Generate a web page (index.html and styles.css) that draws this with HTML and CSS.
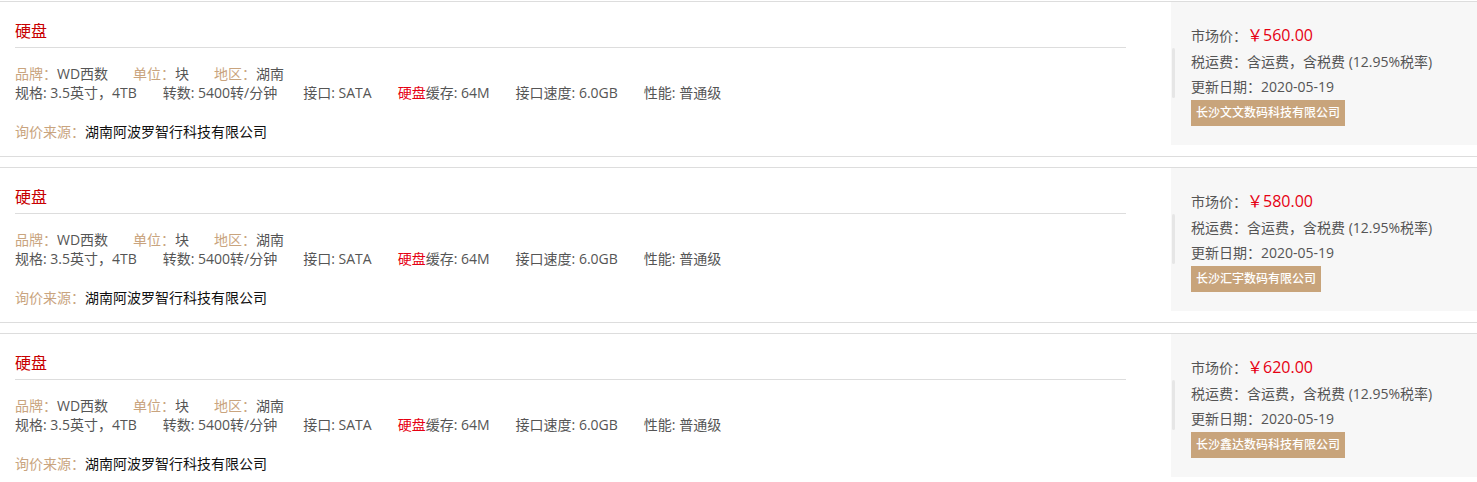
FILE: index.html
```html
<!DOCTYPE html>
<html lang="zh-CN">
<head>
<meta charset="utf-8">
<title>询价列表</title>
<link rel="stylesheet" href="styles.css">
</head>
<body>
<div class="list">

  <div class="item">
    <div class="main">
      <h3 class="title">硬盘</h3>
      <div class="attrs">
        <span class="attr"><span class="lbl">品牌：</span>WD西数</span>
        <span class="attr"><span class="lbl">单位：</span>块</span>
        <span class="attr"><span class="lbl">地区：</span>湖南</span>
      </div>
      <div class="specs">
        <span class="attr">规格: 3.5英寸，4TB</span>
        <span class="attr">转数: 5400转/分钟</span>
        <span class="attr">接口: SATA</span>
        <span class="attr"><em class="hl">硬盘</em>缓存: 64M</span>
        <span class="attr">接口速度: 6.0GB</span>
        <span class="attr">性能: 普通级</span>
      </div>
      <div class="source"><span class="lbl">询价来源：</span><span class="co">湖南阿波罗智行科技有限公司</span></div>
    </div>
    <div class="side">
      <span class="scroll"></span>
      <div class="row">市场价：<span class="price">￥560.00</span></div>
      <div class="row">税运费：含运费，含税费 (12.95%税率)</div>
      <div class="row">更新日期：2020-05-19</div>
      <span class="badge">长沙文文数码科技有限公司</span>
    </div>
  </div>

  <div class="item">
    <div class="main">
      <h3 class="title">硬盘</h3>
      <div class="attrs">
        <span class="attr"><span class="lbl">品牌：</span>WD西数</span>
        <span class="attr"><span class="lbl">单位：</span>块</span>
        <span class="attr"><span class="lbl">地区：</span>湖南</span>
      </div>
      <div class="specs">
        <span class="attr">规格: 3.5英寸，4TB</span>
        <span class="attr">转数: 5400转/分钟</span>
        <span class="attr">接口: SATA</span>
        <span class="attr"><em class="hl">硬盘</em>缓存: 64M</span>
        <span class="attr">接口速度: 6.0GB</span>
        <span class="attr">性能: 普通级</span>
      </div>
      <div class="source"><span class="lbl">询价来源：</span><span class="co">湖南阿波罗智行科技有限公司</span></div>
    </div>
    <div class="side">
      <span class="scroll"></span>
      <div class="row">市场价：<span class="price">￥580.00</span></div>
      <div class="row">税运费：含运费，含税费 (12.95%税率)</div>
      <div class="row">更新日期：2020-05-19</div>
      <span class="badge">长沙汇宇数码有限公司</span>
    </div>
  </div>

  <div class="item">
    <div class="main">
      <h3 class="title">硬盘</h3>
      <div class="attrs">
        <span class="attr"><span class="lbl">品牌：</span>WD西数</span>
        <span class="attr"><span class="lbl">单位：</span>块</span>
        <span class="attr"><span class="lbl">地区：</span>湖南</span>
      </div>
      <div class="specs">
        <span class="attr">规格: 3.5英寸，4TB</span>
        <span class="attr">转数: 5400转/分钟</span>
        <span class="attr">接口: SATA</span>
        <span class="attr"><em class="hl">硬盘</em>缓存: 64M</span>
        <span class="attr">接口速度: 6.0GB</span>
        <span class="attr">性能: 普通级</span>
      </div>
      <div class="source"><span class="lbl">询价来源：</span><span class="co">湖南阿波罗智行科技有限公司</span></div>
    </div>
    <div class="side">
      <span class="scroll"></span>
      <div class="row">市场价：<span class="price">￥620.00</span></div>
      <div class="row">税运费：含运费，含税费 (12.95%税率)</div>
      <div class="row">更新日期：2020-05-19</div>
      <span class="badge">长沙鑫达数码科技有限公司</span>
    </div>
  </div>

</div>
</body>
</html>
```

FILE: styles.css
```css
* { box-sizing: border-box; }

body {
  margin: 0;
  background: #fff;
  font-family: "Open Sans", "Noto Sans CJK SC", sans-serif;
  font-size: 14px;
  color: #555;
}

.list {
  padding-top: 1px;
}

.item {
  display: flex;
  align-items: flex-start;
  border-top: 1px solid #dddddd;
  border-bottom: 1px solid #dddddd;
  margin-bottom: 10px;
}

.main {
  width: 1126px;
  padding-left: 15px;
  padding-bottom: 15px;
  margin-right: 45px;
}

.title {
  margin: 17px 0 0;
  font-size: 16px;
  font-weight: normal;
  line-height: 24px;
  padding-bottom: 4px;
  border-bottom: 1px solid #dddddd;
  color: #c80000;
}

.attrs {
  margin-top: 16px;
  line-height: 19px;
  display: flex;
  gap: 25px;
}

.specs {
  line-height: 19px;
  display: flex;
  gap: 26px;
}

.lbl {
  color: #c9a47e;
}

.hl {
  font-style: normal;
  color: #e60012;
}

.source {
  margin-top: 20px;
  line-height: 19px;
}

.co {
  color: #111;
}

.side {
  position: relative;
  flex: 1;
  background: #f7f7f7;
  padding: 21px 0 19px 20px;
}

.scroll {
  position: absolute;
  left: 1px;
  top: 46px;
  width: 3px;
  height: 50px;
  border-radius: 2px;
  background: #e6e6e6;
}

.row {
  line-height: 25.5px;
}

.price {
  color: #e60012;
  font-size: 16px;
}

.badge {
  display: inline-block;
  height: 26px;
  line-height: 26px;
  padding: 0 5px;
  background: #c8a47b;
  color: #fff;
  font-size: 12px;
  font-weight: 500;
}
```
